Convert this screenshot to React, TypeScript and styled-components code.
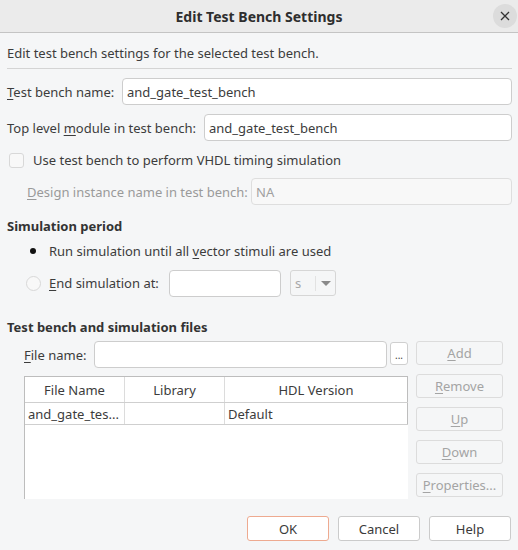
import React from "react";
import styled, { createGlobalStyle } from "styled-components";

const Global = createGlobalStyle`
  html, body { margin: 0; padding: 0; }
  body { background: #f5f6f7; font-family: "Noto Sans", "Open Sans", sans-serif; font-size: 13px; color: #3c3c3c; }
  * { box-sizing: border-box; }
`;

const Dialog = styled.div`
  width: 518px;
  height: 550px;
  background: #f5f6f7;
  display: flex;
  flex-direction: column;
`;

const TitleBar = styled.div`
  height: 33px;
  background: #ebebeb;
  border-bottom: 1px solid #c4c4c4;
  display: flex;
  align-items: center;
  justify-content: center;
  position: relative;
  font-weight: bold;
  font-size: 14px;
  color: #2e2e2e;
`;

const CloseBtn = styled.div`
  position: absolute;
  right: 1px;
  top: 4px;
  width: 24px;
  height: 24px;
  border-radius: 50%;
  background: #dcdcdc;
  display: flex;
  align-items: center;
  justify-content: center;
`;

const Body = styled.div`
  flex: 1;
  display: flex;
  flex-direction: column;
  padding: 0 6px 0 7px;
`;

const Intro = styled.div`
  height: 36px;
  display: flex;
  align-items: center;
  padding-top: 5px;
  border-bottom: 1px solid #d4d4d4;
`;

const Row = styled.div<{ $indent?: number; $h?: number; $mt?: number }>`
  display: flex;
  align-items: center;
  height: ${(p) => p.$h ?? 27}px;
  margin-top: ${(p) => p.$mt ?? 0}px;
  padding-left: ${(p) => p.$indent ?? 0}px;
`;

const Label = styled.span<{ $w?: number; $disabled?: boolean }>`
  width: ${(p) => (p.$w ? `${p.$w}px` : "auto")};
  flex: none;
  color: ${(p) => (p.$disabled ? "#9a9a9a" : "#3c3c3c")};
  white-space: nowrap;
`;

const U = styled.span`
  text-decoration: underline;
  text-underline-offset: 2px;
`;

const Input = styled.div<{ $disabled?: boolean; $w?: number }>`
  flex: ${(p) => (p.$w ? "none" : "1")};
  width: ${(p) => (p.$w ? `${p.$w}px` : "auto")};
  height: 27px;
  border: 1px solid ${(p) => (p.$disabled ? "#dedede" : "#cdcdcd")};
  border-radius: 4px;
  background: ${(p) => (p.$disabled ? "#f8f8f8" : "#ffffff")};
  color: ${(p) => (p.$disabled ? "#a0a0a0" : "#3c3c3c")};
  display: flex;
  align-items: center;
  padding-left: 4px;
`;

const Section = styled.div<{ $mt: number }>`
  font-weight: bold;
  color: #333;
  margin-top: ${(p) => p.$mt}px;
  height: 18px;
  display: flex;
  align-items: center;
`;

const CheckBox = styled.span`
  width: 15px;
  height: 15px;
  border: 1px solid #d8d8d8;
  border-radius: 3px;
  background: #f8f8f8;
  margin: 0 9px 0 2px;
  flex: none;
`;

const Bullet = styled.span`
  width: 6px;
  height: 6px;
  border-radius: 50%;
  background: #111;
  margin: 0 13px 0 23px;
  flex: none;
`;

const Radio = styled.span`
  width: 15px;
  height: 15px;
  border: 1px solid #d8d8d8;
  border-radius: 50%;
  background: #f8f8f8;
  margin: 0 8px 0 19px;
  flex: none;
`;

const Combo = styled.div`
  width: 46px;
  height: 26px;
  border: 1px solid #d6d6d6;
  border-radius: 3px;
  margin-left: 9px;
  display: flex;
  align-items: center;
  color: #a8a8a8;
  padding-left: 4px;
`;

const ComboSep = styled.span`
  width: 1px;
  height: 15px;
  background: #e2e2e2;
  margin-left: 14px;
`;

const Arrow = styled.span`
  width: 0;
  height: 0;
  border-left: 5px solid transparent;
  border-right: 5px solid transparent;
  border-top: 5px solid #8a8a8a;
  margin-left: 5px;
`;

const FilesArea = styled.div`
  display: flex;
  margin-top: 5px;
  padding-left: 17px;
  gap: 8px;
`;

const FilesLeft = styled.div`
  width: 384px;
  display: flex;
  flex-direction: column;
`;

const SmallBtn = styled.div`
  width: 18px;
  height: 23px;
  margin-left: 3px;
  margin-bottom: 3px;
  border: 1px solid #cfcfcf;
  border-radius: 3px;
  background: #fff;
  display: flex;
  align-items: flex-end;
  justify-content: center;
  font-size: 10px;
  padding-bottom: 4px;
  line-height: 1;
  color: #444;
`;

const Table = styled.div`
  margin-top: 8px;
  height: 123px;
  background: #fff;
  border-left: 1px solid #bdbdbd;
  border-top: 1px solid #bdbdbd;
  display: flex;
  flex-direction: column;
`;

const TRow = styled.div<{ $h: number }>`
  display: grid;
  grid-template-columns: 100px 100px 183px;
  height: ${(p) => p.$h}px;
  border-bottom: 1px solid #cfcfcf;
`;

const Cell = styled.div<{ $head?: boolean; $last?: boolean }>`
  border-right: 1px solid ${(p) => (p.$last ? "#bdbdbd" : "#dcdcdc")};
  display: flex;
  align-items: center;
  justify-content: ${(p) => (p.$head ? "center" : "flex-start")};
  padding-left: ${(p) => (p.$head ? 0 : 3)}px;
  white-space: nowrap;
  overflow: hidden;
  color: #3c3c3c;
`;

const SideButtons = styled.div`
  display: flex;
  flex-direction: column;
  gap: 9px;
`;

const SideBtn = styled.div`
  width: 87px;
  height: 24px;
  border: 1px solid #dcdcdc;
  border-radius: 3px;
  display: flex;
  align-items: center;
  justify-content: center;
  color: #a4a4a4;
`;

const Footer = styled.div`
  display: flex;
  justify-content: flex-end;
  gap: 9px;
  margin-top: 17px;
  padding-right: 1px;
`;

const FootBtn = styled.div<{ $primary?: boolean }>`
  width: 82px;
  height: 25px;
  border: 1px solid ${(p) => (p.$primary ? "#eeaa90" : "#cbcbcb")};
  border-radius: 3px;
  background: #fff;
  display: flex;
  align-items: center;
  justify-content: center;
  color: #3a3a3a;
`;

export default function App() {
  return (
    <Dialog>
      <Global />
      <TitleBar>
        Edit Test Bench Settings
        <CloseBtn>
          <svg width="10" height="10" viewBox="0 0 10 10">
            <path d="M1 1L9 9M9 1L1 9" stroke="#333" strokeWidth="1.3" />
          </svg>
        </CloseBtn>
      </TitleBar>
      <Body>
        <Intro>Edit test bench settings for the selected test bench.</Intro>
        <Row $mt={9}>
          <Label $w={115}>
            <U>T</U>est bench name:
          </Label>
          <Input>and_gate_test_bench</Input>
        </Row>
        <Row $mt={9}>
          <Label $w={197}>
            Top level <U>m</U>odule in test bench:
          </Label>
          <Input>and_gate_test_bench</Input>
        </Row>
        <Row $mt={5} $h={28}>
          <CheckBox />
          <Label>Use test bench to perform VHDL timing simulation</Label>
        </Row>
        <Row $mt={4} $indent={20}>
          <Label $w={224} $disabled>
            <U>D</U>esign instance name in test bench:
          </Label>
          <Input $disabled>NA</Input>
        </Row>
        <Section $mt={12}>Simulation period</Section>
        <Row $mt={2} $h={28}>
          <Bullet />
          <Label>
            Run simulation until all <U>v</U>ector stimuli are used
          </Label>
        </Row>
        <Row $mt={1} $h={34}>
          <Radio />
          <Label $w={120}>
            <U>E</U>nd simulation at:
          </Label>
          <Input $w={112} />
          <Combo>
            s<ComboSep />
            <Arrow />
          </Combo>
        </Row>
        <Section $mt={18}>Test bench and simulation files</Section>
        <FilesArea>
          <FilesLeft>
            <Row $h={27}>
              <Label $w={70}>
                <U>F</U>ile name:
              </Label>
              <Input />
              <SmallBtn>...</SmallBtn>
            </Row>
            <Table>
              <TRow $h={26}>
                <Cell $head>File Name</Cell>
                <Cell $head>Library</Cell>
                <Cell $head $last>HDL Version</Cell>
              </TRow>
              <TRow $h={22}>
                <Cell>and_gate_tes...</Cell>
                <Cell></Cell>
                <Cell $last>Default</Cell>
              </TRow>
            </Table>
          </FilesLeft>
          <SideButtons>
            <SideBtn>
              <U>A</U>dd
            </SideBtn>
            <SideBtn>
              <U>R</U>emove
            </SideBtn>
            <SideBtn>
              <U>U</U>p
            </SideBtn>
            <SideBtn>
              <U>D</U>own
            </SideBtn>
            <SideBtn>
              <U>P</U>roperties...
            </SideBtn>
          </SideButtons>
        </FilesArea>
        <Footer>
          <FootBtn $primary>OK</FootBtn>
          <FootBtn>Cancel</FootBtn>
          <FootBtn>Help</FootBtn>
        </Footer>
      </Body>
    </Dialog>
  );
}
